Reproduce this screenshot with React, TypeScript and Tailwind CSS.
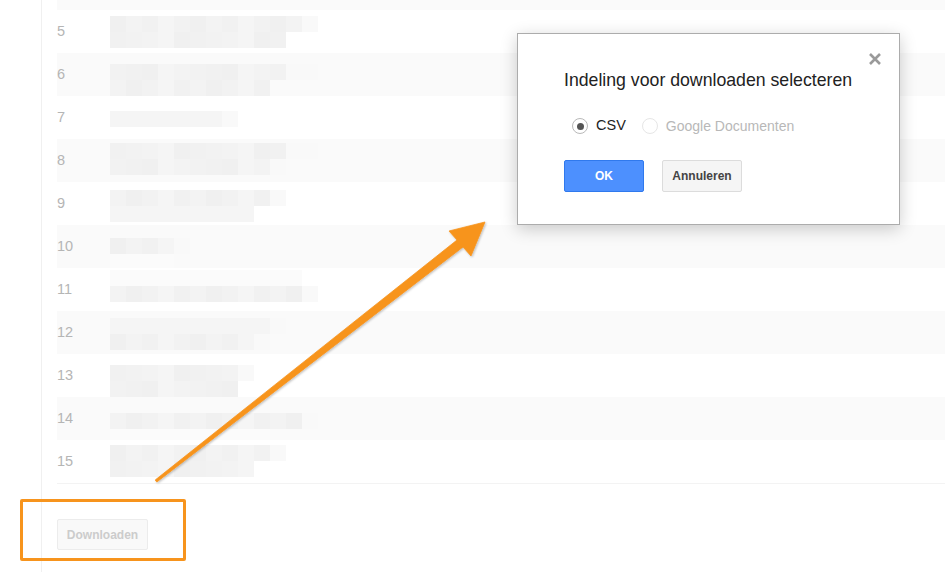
import React from "react";

const shades = ["bg-[#f0f0f0]", "bg-[#f1f1f1]", "bg-[#f2f2f2]", "bg-[#f3f3f3]", "bg-[#f5f5f5]"];
const faint = "bg-[#fbfbfb]";

type Line = { blocks: number; faint?: boolean; fade?: number };
type Row = { n: number; pt: string; lines: Line[] };

const rows: Row[] = [
  { n: 5, pt: "pt-[6px]", lines: [{ blocks: 12, fade: 1 }, { blocks: 11 }] },
  { n: 6, pt: "pt-[11px]", lines: [{ blocks: 11, fade: 2 }, { blocks: 10 }] },
  { n: 7, pt: "pt-[15px]", lines: [{ blocks: 7, fade: 1 }] },
  { n: 8, pt: "pt-[4px]", lines: [{ blocks: 11, fade: 2 }, { blocks: 10, fade: 1 }] },
  { n: 9, pt: "pt-[8px]", lines: [{ blocks: 10, fade: 1 }, { blocks: 9 }] },
  { n: 10, pt: "pt-[13px]", lines: [{ blocks: 4, fade: 1 }, { blocks: 4, faint: true }] },
  { n: 11, pt: "pt-[2px]", lines: [{ blocks: 12, faint: true }, { blocks: 12, fade: 1 }] },
  { n: 12, pt: "pt-[7px]", lines: [{ blocks: 10, fade: 1 }, { blocks: 9, fade: 1 }] },
  { n: 13, pt: "pt-[11px]", lines: [{ blocks: 8, fade: 1 }, { blocks: 8 }] },
  { n: 14, pt: "pt-[16px]", lines: [{ blocks: 12, fade: 1 }, { blocks: 10, faint: true }] },
  { n: 15, pt: "pt-[5px]", lines: [{ blocks: 10, fade: 1 }, { blocks: 9 }] },
];

function BlurLine({ line, seed }: { line: Line; seed: number }) {
  const total = line.blocks + (line.fade ?? 0);
  return (
    <div className="flex h-[16px]">
      {Array.from({ length: total }).map((_, j) => {
        let cls = line.faint ? faint : shades[(seed * 7 + j * 3 + ((seed * j) % 5)) % shades.length];
        if (j >= line.blocks) cls = "bg-[#f9f9f9]";
        return <div key={j} className={`w-[16px] h-[16px] ${cls}`} />;
      })}
    </div>
  );
}

export default function App() {
  return (
    <div className="relative w-[945px] h-[572px] overflow-hidden bg-white font-['Liberation_Sans',Arial,sans-serif]">
      <div className="flex h-full">
        <div className="w-[42px] shrink-0 border-r border-[#f0f0f0]" />
        <div className="flex-1 pl-[15px]">
          <div className="h-[10px] bg-[#fafafa]" />
          <div className="border-b border-[#f3f3f3]">
            {rows.map((r) => (
              <div
                key={r.n}
                className={`flex h-[43px] overflow-hidden ${r.n % 2 === 0 ? "bg-[#fafafa]" : "bg-white"}`}
              >
                <div className="w-[53px] shrink-0 flex items-center text-[14.5px] text-[#b5b5b5]">{r.n}</div>
                <div className={`flex flex-col ${r.pt}`}>
                  {r.lines.map((l, i) => (
                    <BlurLine key={i} line={l} seed={r.n + i * 3} />
                  ))}
                </div>
              </div>
            ))}
          </div>
          <button className="mt-[35px] w-[91px] h-[31px] rounded-[2px] border border-[#ececec] bg-[#f9f9f9] text-[12px] font-bold text-[#cccccc]">
            Downloaden
          </button>
        </div>
      </div>

      {/* annotation: highlight + arrow */}
      <div className="absolute left-[20px] top-[499px] w-[166px] h-[62px] border-[3px] border-[#f7941d] rounded-[2px]" />
      <svg className="absolute inset-0 pointer-events-none" width="945" height="572" viewBox="0 0 945 572">
        <defs>
          <filter id="sh" x="-10%" y="-10%" width="120%" height="120%">
            <feDropShadow dx="1" dy="1" stdDeviation="0.8" floodColor="#000" floodOpacity="0.25" />
          </filter>
        </defs>
        <polygon
          points="155.2,480 457,240 449,231 485,222 471,256 463,247 156.8,482"
          fill="#f7941d"
          stroke="#f7941d"
          strokeWidth="0.8"
          strokeLinejoin="round"
          filter="url(#sh)"
        />
      </svg>

      {/* dialog */}
      <div className="absolute left-[517px] top-[33px] w-[383px] h-[192px] bg-white border border-[#acacac] shadow-[0_4px_16px_rgba(0,0,0,0.2)] pl-[46px] pt-[35px]">
        <svg className="absolute right-[18px] top-[19px]" width="12" height="12" viewBox="0 0 12 12">
          <path d="M1 1L11 11M11 1L1 11" stroke="#9a9a9a" strokeWidth="2.6" />
        </svg>
        <h2 className="text-[17.7px] leading-[22px] text-[#222222]">Indeling voor downloaden selecteren</h2>
        <div className="mt-[25px] h-[20px] flex items-center pl-[8px] text-[14px]">
          <span className="w-[16px] h-[16px] rounded-full border border-[#b9b9b9] bg-white flex items-center justify-center">
            <span className="w-[7px] h-[7px] rounded-full bg-[#555555]" />
          </span>
          <span className="ml-[8px] text-[14.5px] text-[#222222]">CSV</span>
          <span className="ml-[16px] w-[16px] h-[16px] rounded-full border border-[#e6e6e6] bg-white" />
          <span className="ml-[8px] text-[#b8b8b8]">Google Documenten</span>
        </div>
        <div className="mt-[24px] flex gap-[18px]">
          <button className="w-[80px] h-[32px] rounded-[2px] border border-[#3079ed] bg-[#4d90fe] text-[12px] font-bold text-white">
            OK
          </button>
          <button className="w-[80px] h-[32px] rounded-[2px] border border-[#dcdcdc] bg-[#f5f5f5] text-[12px] font-bold text-[#444444]">
            Annuleren
          </button>
        </div>
      </div>
    </div>
  );
}
